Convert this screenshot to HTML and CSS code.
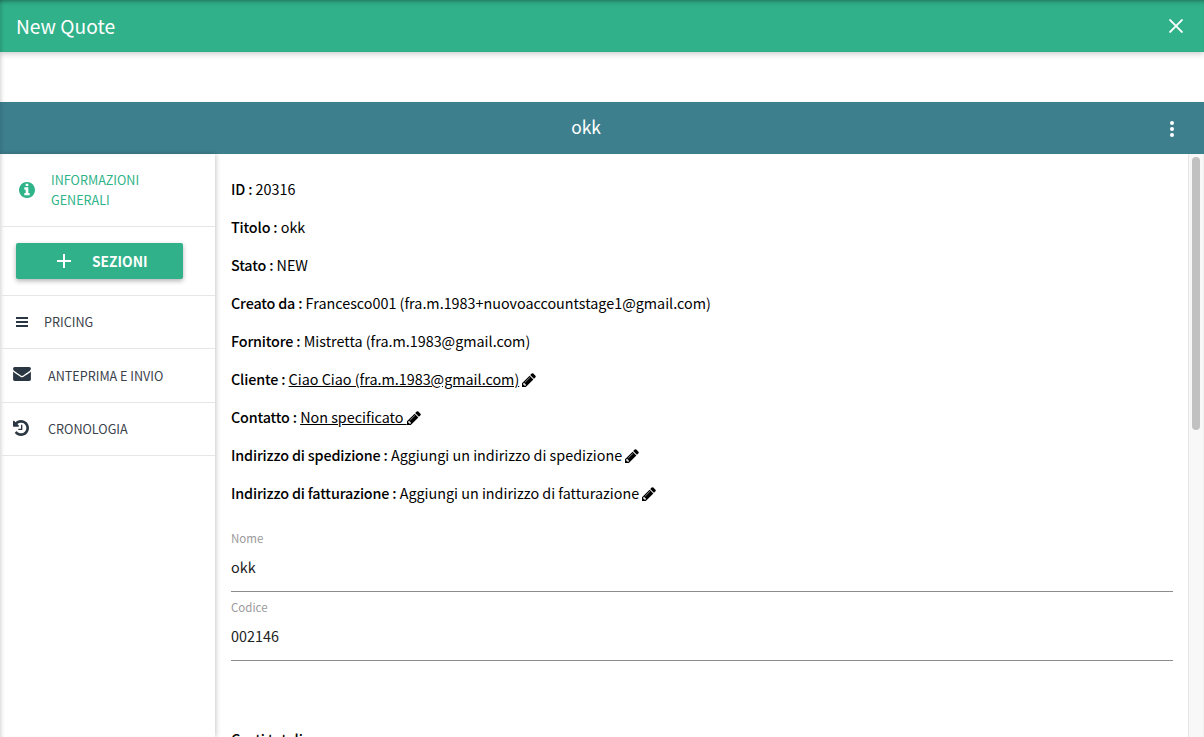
FILE: index.html
```html
<!DOCTYPE html>
<html lang="it">
<head>
<meta charset="utf-8">
<title>New Quote</title>
<link rel="stylesheet" href="styles.css">
</head>
<body>
<svg class="defs" width="0" height="0" aria-hidden="true">
  <symbol id="pencil" viewBox="0 0 1536 1536"><path d="M363 1408l91-91-235-235-91 91v107h128v128h107zm523-928q0-22-22-22-10 0-17 7L305 1007q-7 7-7 17 0 22 22 22 10 0 17-7l542-542q7-7 7-17zm-54-192l416 416-832 832H0v-416zm683 96q0 53-37 90l-166 166-416-416 166-165q36-38 90-38 53 0 91 38l235 234q37 39 37 91z"/></symbol>
</svg>
<div class="app">
  <header class="topbar">
    <span class="topbar-title">New Quote</span>
    <svg class="close" viewBox="0 0 14 14"><path d="M.5.5l13 13M13.500.5l-13 13"/></svg>
  </header>
  <div class="spacer"></div>
  <div class="subbar">
    <span class="subbar-title">okk</span>
    <span class="dots"><i></i><i></i><i></i></span>
  </div>
  <div class="main">
    <aside class="side">
      <div class="side-item side-active">
        <svg class="ico-info" viewBox="0 0 1536 1536"><path d="M1024 1248v-160q0-14-9-23t-23-9h-96V544q0-14-9-23t-23-9H544q-14 0-23 9t-9 23v160q0 14 9 23t23 9h96v320h-96q-14 0-23 9t-9 23v160q0 14 9 23t23 9h448q14 0 23-9t9-23zM896 352V192q0-14-9-23t-23-9H672q-14 0-23 9t-9 23v160q0 14 9 23t23 9h192q14 0 23-9t9-23zm640 416q0 209-103 385.500T1153.500 1433 768 1536t-385.500-103T103 1153.500 0 768t103-385.500T382.500 103 768 0t385.500 103T1433 382.500 1536 768z"/></svg>
        <span>INFORMAZIONI<br>GENERALI</span>
      </div>
      <div class="side-btn-wrap">
        <button class="side-btn"><svg viewBox="0 0 14 14"><path d="M7 0v14M0 7h14"/></svg><span>SEZIONI</span></button>
      </div>
      <div class="side-item side-pricing">
        <svg class="ico-bars" viewBox="0 0 12 10"><path d="M0 0h12v2H0zM0 4h12v2H0zM0 8h12v2H0z"/></svg>
        <span>PRICING</span>
      </div>
      <div class="side-item side-mail">
        <svg class="ico-mail" viewBox="0 256 1792 1408"><path d="M1792 710v794q0 66-47 113t-113 47H160q-66 0-113-47T0 1504V710q44 49 101 87 362 246 497 345 57 42 92.500 65.500t94.500 48 110 24.500h2q51 0 110-24.500t94.500-48 92.500-65.500q170-123 498-345 57-39 100-87zm0-294q0 79-49 151t-122 123q-376 261-468 325-10 7-42.500 30.500t-54 38-52 32.500-57.500 27-50 9h-2q-23 0-50-9t-57.500-27-52-32.500-54-38T639 1015q-91-64-262-182.500T172 690q-62-42-117-115.500T0 438q0-78 41.500-130T160 256h1472q65 0 112.500 47t47.500 113z"/></svg>
        <span>ANTEPRIMA E INVIO</span>
      </div>
      <div class="side-item side-hist">
        <svg class="ico-hist" viewBox="0 0 1536 1536"><path d="M1536 768q0 156-61 298t-164 245-245 164-298 61q-172 0-327-72.500T177 1259q-7-10-6.500-22.500t8.500-20.500l137-138q10-9 25-9 16 2 23 12 73 95 179 147t225 52q104 0 198.500-40.500T1130 1130t109.500-163.500T1280 768t-40.500-198.500T1130 406 966.500 296.500 768 256q-98 0-188 35.500T420 393l137 138q31 30 14 69-17 40-59 40H64q-26 0-45-19T0 576V128q0-42 40-59 39-17 69 14l130 129q107-101 244.500-156.500T768 0q156 0 298 61t245 164 164 245 61 298zM896 480v448q0 14-9 23t-23 9H544q-14 0-23-9t-9-23v-64q0-14 9-23t23-9h224V480q0-14 9-23t23-9h64q14 0 23 9t9 23z"/></svg>
        <span>CRONOLOGIA</span>
      </div>
    </aside>
    <section class="content">
      <p class="row"><b>ID :</b> 20316</p>
      <p class="row"><b>Titolo :</b> okk</p>
      <p class="row"><b>Stato :</b> NEW</p>
      <p class="row"><b>Creato da :</b> Francesco001 (fra.m.1983+nuovoaccountstage1@gmail.com)</p>
      <p class="row"><b>Fornitore :</b> Mistretta (fra.m.1983@gmail.com)</p>
      <p class="row"><b>Cliente :</b> <u>Ciao Ciao (fra.m.1983@gmail.com)</u> <svg class="pen"><use href="#pencil"/></svg></p>
      <p class="row"><b>Contatto :</b> <u>Non specificato <svg class="pen"><use href="#pencil"/></svg></u></p>
      <p class="row"><b>Indirizzo di spedizione :</b> Aggiungi un indirizzo di spedizione <svg class="pen"><use href="#pencil"/></svg></p>
      <p class="row"><b>Indirizzo di fatturazione :</b> Aggiungi un indirizzo di fatturazione <svg class="pen"><use href="#pencil"/></svg></p>
      <div class="field field-first"><label>Nome</label><div class="value">okk</div></div>
      <div class="field"><label>Codice</label><div class="value">002146</div></div>
      <p class="row cut"><b>Costi totali</b></p>
    </section>
    <div class="scroll"><div class="thumb"></div></div>
  </div>
</div>
</body>
</html>
```
FILE: styles.css
```css
* { box-sizing: border-box; }
html, body { margin: 0; height: 100%; overflow: hidden; }
body { font-family: "Noto Sans CJK JP", "Noto Sans", sans-serif; color: #000; background: #fff; }
.defs { position: absolute; }
.app { display: flex; flex-direction: column; height: 737px; overflow: hidden; }

.topbar { flex: none; height: 52px; background: #30b189; display: flex; align-items: center; justify-content: space-between; padding: 0 21px 0 16px; color: #fff; box-shadow: inset 0 5px 5px -4px rgba(0,0,0,.4), inset 4px 0 4px -3px rgba(0,0,0,.18), 0 2px 6px rgba(0,0,0,.2); position: relative; z-index: 2; }
.topbar-title { font-size: 19.2px; line-height: 52px; margin-top: -1px; }
.close { width: 14px; height: 14px; fill: none; stroke: #fff; stroke-width: 1.9; }

.spacer { flex: none; height: 50px; background: #fff; box-shadow: inset 4px 0 4px -3px rgba(0,0,0,.18); }

.subbar { flex: none; height: 52px; background: #3e7f8e; display: flex; align-items: center; justify-content: center; color: #fff; position: relative; padding-right: 32px; box-shadow: inset 4px 0 4px -3px rgba(0,0,0,.15); }
.subbar-title { font-size: 17.4px; line-height: 52px; margin-top: -2px; }
.dots { position: absolute; right: 30px; top: 19px; display: flex; flex-direction: column; gap: 2px; }
.dots i { width: 4px; height: 4px; border-radius: 50%; background: #fff; display: block; }

.main { flex: 1; display: flex; min-height: 0; }
.side { flex: none; width: 215px; background: #fff; box-shadow: inset 4px 0 4px -3px rgba(0,0,0,.18), 1px 0 5px rgba(0,0,0,.22); position: relative; z-index: 1; }
.side-item { display: flex; align-items: center; font-size: 12.6px; color: #39424c; border-bottom: 1px solid #e6e6e6; }
.side-active { height: 73px; color: #2fb389; padding-left: 19px; line-height: 20px; }
.ico-info { width: 16px; height: 16px; fill: #2fb389; margin-right: 16px; flex: none; }
.side-btn-wrap { height: 69px; padding: 16px 0 0 16px; border-bottom: 1px solid #e6e6e6; }
.side-btn { width: 167px; height: 36px; border: 0; border-radius: 2px; background: #30b189; color: #fff; font: 700 13.8px "Noto Sans CJK JP", sans-serif; display: flex; align-items: center; padding: 0 0 0 41px; box-shadow: 0 2px 5px rgba(0,0,0,.3); }
.side-btn svg { width: 14px; height: 14px; fill: none; stroke: #fff; stroke-width: 2; margin-right: 21px; }
.side-pricing { height: 53px; padding-left: 16px; }
.side-pricing span { margin-top: -2px; }
.ico-bars { width: 12px; height: 10px; fill: #2a3641; margin-right: 16px; }
.side-mail { height: 54px; padding-left: 13px; }
.ico-mail { width: 18px; height: 14px; fill: #2a3641; margin: -3px 17px 0 0; }
.side-hist { height: 53px; padding-left: 13px; }
.side-hist span { margin-top: -1px; }
.ico-hist { width: 16px; height: 16px; fill: #2a3641; margin: -3px 19px 0 0; }

.content { flex: 1; min-width: 0; padding: 24px 15px 0 16px; overflow: hidden; font-size: 14.35px; }
.row { margin: 0 0 16px; line-height: 22px; height: 22px; white-space: nowrap; }
.row b { font-weight: 500; letter-spacing: -.16px; }
.pen { width: 14px; height: 14px; vertical-align: -2px; }
.field { height: 69px; border-bottom: 1px solid #8c8c8c; }
.field-first { margin-top: 18px; height: 70px; }
.field label { display: block; font-size: 11.5px; line-height: 16px; color: #9a9a9a; padding-top: 7px; height: 23px; }
.field-first label { padding-top: 8px; height: 24px; }
.value { font-size: 14.4px; line-height: 22px; margin-top: 10px; color: #212121; }
.cut { margin-top: 67px; }

.scroll { flex: none; width: 16px; background: #f8f8f8; border-left: 1px solid #e6e6e6; border-right: 1px solid #f0f0f0; padding: 3px 0 0 3px; }
.thumb { width: 8px; height: 273px; border-radius: 4px; background: #c1c1c1; }
```
